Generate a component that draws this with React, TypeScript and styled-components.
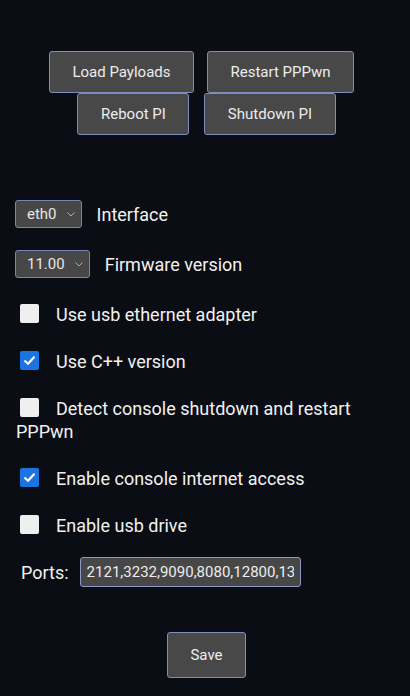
import { useState } from 'react';
import styled, { createGlobalStyle } from 'styled-components';

const GlobalStyle = createGlobalStyle`
  body {
    margin: 0;
    background: #0b0d14;
    color: #f1f1f1;
    font-family: Roboto, 'Liberation Sans', sans-serif;
  }
`;

const Page = styled.div`
  padding: 51px 16px 18px;
`;

const ActionRows = styled.div`
  display: flex;
  flex-direction: column;
`;

const ActionRow = styled.div<{ $gap: number; $shift: number }>`
  display: flex;
  justify-content: center;
  gap: ${(p) => p.$gap}px;
  padding-left: ${(p) => (p.$shift > 0 ? p.$shift : 0)}px;
  padding-right: ${(p) => (p.$shift < 0 ? -p.$shift : 0)}px;
`;

const Button = styled.button<{ $tall?: boolean }>`
  height: ${(p) => (p.$tall ? 46 : 42)}px;
  padding: 0 22.5px;
  background: #484848;
  color: #ececec;
  border: 1px solid #7e8cc0;
  border-radius: 3px;
  font-family: Roboto, 'Liberation Sans', sans-serif;
  font-size: 15px;
  cursor: pointer;
`;

const Settings = styled.div`
  display: flex;
  flex-direction: column;
  margin-top: 65px;
`;

const SelectList = styled.div`
  display: flex;
  flex-direction: column;
  gap: 22px;
`;

const SelectRow = styled.div`
  display: flex;
  align-items: center;
  gap: 15px;
  margin-left: -1px;
`;

const SelectBox = styled.div`
  display: flex;
  align-items: center;
  gap: 10px;
  height: 28px;
  box-sizing: border-box;
  padding: 0 6px 0 11px;
  background: #474747;
  border: 1px solid #7885b6;
  border-radius: 3px;
  color: #e6e6e6;
  font-size: 15px;
`;

const FieldLabel = styled.span`
  font-size: 18px;
`;

const CheckList = styled.div`
  display: flex;
  flex-direction: column;
  gap: 24px;
  margin-top: 25px;
`;

const CheckRow = styled.label`
  display: block;
  font-size: 18px;
  line-height: 23px;
  cursor: pointer;
`;

const Box = styled.span<{ $checked: boolean }>`
  display: inline-flex;
  align-items: center;
  justify-content: center;
  vertical-align: top;
  width: 19px;
  height: 19px;
  margin: 1px 17px 0 4px;
  border-radius: 2px;
  background: ${(p) => (p.$checked ? '#1c74e3' : '#efefef')};
`;

const PortsRow = styled.div`
  display: flex;
  align-items: center;
  gap: 11px;
  margin-top: 20px;
  padding-left: 5px;
`;

const PortsInput = styled.input`
  width: 221px;
  height: 30px;
  box-sizing: border-box;
  padding: 0 6px;
  background: #474747;
  border: 1px solid #8d98c2;
  border-radius: 3px;
  color: #ececec;
  font-family: Roboto, 'Liberation Sans', sans-serif;
  font-size: 15px;
  outline: none;
`;

const SaveRow = styled.div`
  display: flex;
  justify-content: center;
  margin-top: 45px;
  padding-left: 3px;
`;

function Chevron() {
  return (
    <svg width="8" height="5" viewBox="0 0 8 5">
      <polyline points="0.5,0.5 4,4 7.5,0.5" fill="none" stroke="#aeaeae" strokeWidth="1" />
    </svg>
  );
}

function Check() {
  return (
    <svg width="13" height="11" viewBox="0 0 13 11">
      <polyline points="1.5,5.5 5,8.8 11.5,1.8" fill="none" stroke="#ffffff" strokeWidth="2.2" />
    </svg>
  );
}

const options = [
  { key: 'usbEth', label: 'Use usb ethernet adapter' },
  { key: 'cpp', label: 'Use C++ version' },
  { key: 'detect', label: 'Detect console shutdown and restart PPPwn' },
  { key: 'internet', label: 'Enable console internet access' },
  { key: 'usbDrive', label: 'Enable usb drive' },
];

export default function App() {
  const [checked, setChecked] = useState<Record<string, boolean>>({
    usbEth: false,
    cpp: true,
    detect: false,
    internet: true,
    usbDrive: false,
  });

  const toggle = (key: string) => setChecked((c) => ({ ...c, [key]: !c[key] }));

  return (
    <Page>
      <GlobalStyle />
      <ActionRows>
        <ActionRow $gap={13} $shift={-7}>
          <Button>Load Payloads</Button>
          <Button>Restart PPPwn</Button>
        </ActionRow>
        <ActionRow $gap={15} $shift={3}>
          <Button>Reboot PI</Button>
          <Button>Shutdown PI</Button>
        </ActionRow>
      </ActionRows>

      <Settings>
        <SelectList>
          <SelectRow>
            <SelectBox>
              eth0
              <Chevron />
            </SelectBox>
            <FieldLabel>Interface</FieldLabel>
          </SelectRow>
          <SelectRow>
            <SelectBox>
              11.00
              <Chevron />
            </SelectBox>
            <FieldLabel>Firmware version</FieldLabel>
          </SelectRow>
        </SelectList>

        <CheckList>
          {options.map((o) => (
            <CheckRow key={o.key} onClick={() => toggle(o.key)}>
              <Box $checked={checked[o.key]}>{checked[o.key] && <Check />}</Box>
              {o.label}
            </CheckRow>
          ))}
        </CheckList>

        <PortsRow>
          <FieldLabel>Ports:</FieldLabel>
          <PortsInput defaultValue="2121,3232,9090,8080,12800,1337" />
        </PortsRow>

        <SaveRow>
          <Button $tall>Save</Button>
        </SaveRow>
      </Settings>
    </Page>
  );
}
